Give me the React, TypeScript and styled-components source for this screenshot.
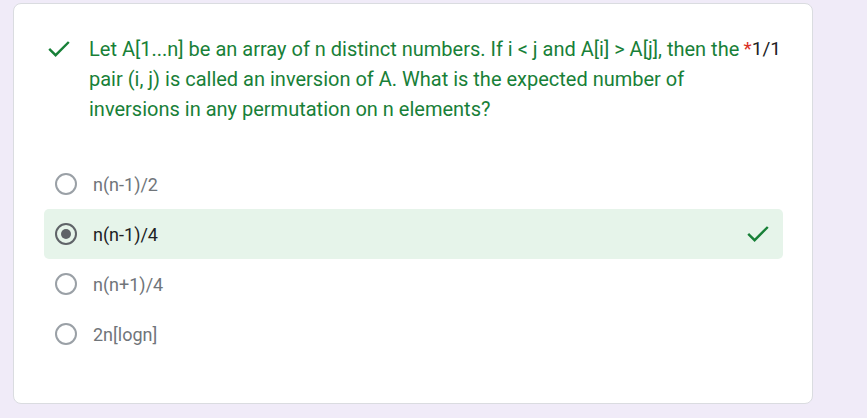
import React from "react";
import styled, { createGlobalStyle } from "styled-components";

const Global = createGlobalStyle`
  html, body { margin: 0; padding: 0; background: #f0ebf8; }
  body { font-family: Roboto, "Noto Sans", Arial, sans-serif; }
`;

const Page = styled.div`
  padding: 3px 0 0 13px;
  min-height: 415px;
  box-sizing: border-box;
`;

const Card = styled.div`
  width: 800px;
  height: 401px;
  box-sizing: border-box;
  background: #fff;
  border: 1px solid #dadce0;
  border-radius: 8px;
  padding: 30px 31px 0 30px;
`;

const Header = styled.div`
  display: flex;
  align-items: flex-start;
`;

const HeaderIcon = styled.div`
  width: 22px;
  height: 30px;
  margin-left: 4px;
  margin-right: 19px;
  display: flex;
  align-items: center;
  justify-content: center;
  flex-shrink: 0;
`;

const Question = styled.div`
  flex: 1;
  font-size: 20px;
  line-height: 30px;
  color: #188038;
`;

const Points = styled.div`
  flex-shrink: 0;
  font-size: 19px;
  line-height: 30px;
  color: #202124;
`;

const Star = styled.span`
  color: #d93025;
`;

const Options = styled.div`
  margin-top: 35px;
  display: flex;
  flex-direction: column;
`;

const Row = styled.div<{ $correct?: boolean }>`
  display: flex;
  align-items: center;
  height: 50px;
  margin-right: -2px;
  padding: 0 14px 0 11px;
  border-radius: 5px;
  background: ${(p) => (p.$correct ? "#e6f4ea" : "transparent")};
`;

const Radio = styled.div<{ $checked?: boolean }>`
  width: 22px;
  height: 22px;
  box-sizing: border-box;
  border-radius: 50%;
  border: 2.5px solid ${(p) => (p.$checked ? "#5f6368" : "#9aa0a6")};
  display: flex;
  align-items: center;
  justify-content: center;
  flex-shrink: 0;
  &::after {
    content: "";
    display: ${(p) => (p.$checked ? "block" : "none")};
    width: 10px;
    height: 10px;
    border-radius: 50%;
    background: #5f6368;
  }
`;

const Label = styled.div<{ $checked?: boolean }>`
  flex: 1;
  margin-left: 16px;
  font-size: 18px;
  color: ${(p) => (p.$checked ? "#202124" : "#70757a")};
`;

const Check = () => (
  <svg width={22} height={16} viewBox="0 0 22 16">
    <polyline
      points="1.2,7.8 7.6,14.2 20.8,1"
      fill="none"
      stroke="#188038"
      strokeWidth={2.4}
    />
  </svg>
);

const options = [
  { text: "n(n-1)/2" },
  { text: "n(n-1)/4", checked: true, correct: true },
  { text: "n(n+1)/4" },
  { text: "2n[logn]" },
];

export default function App() {
  return (
    <>
      <Global />
      <Page>
        <Card>
          <Header>
            <HeaderIcon>
              <Check />
            </HeaderIcon>
            <Question>
              Let A[1...n] be an array of n distinct numbers. If i &lt; j and A[i] &gt; A[j], then the
              pair (i, j) is called an inversion of A. What is the expected number of inversions in
              any permutation on n elements?
            </Question>
            <Points>
              <Star>*</Star>1/1
            </Points>
          </Header>
          <Options>
            {options.map((o) => (
              <Row key={o.text} $correct={o.correct}>
                <Radio $checked={o.checked} />
                <Label $checked={o.checked}>{o.text}</Label>
                {o.correct && <Check />}
              </Row>
            ))}
          </Options>
        </Card>
      </Page>
    </>
  );
}
